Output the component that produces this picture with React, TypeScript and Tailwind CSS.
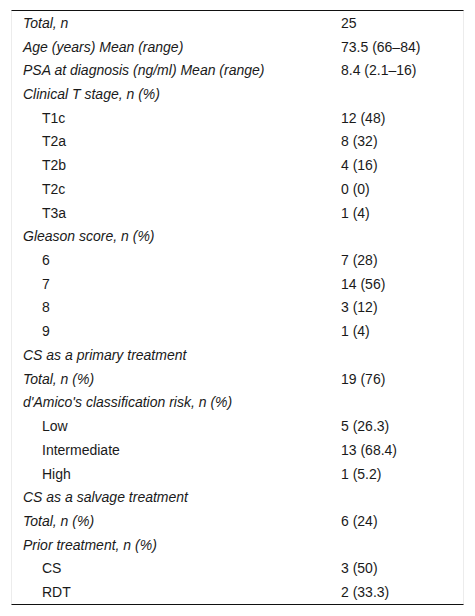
import React from 'react';

type Row = { label: string; value?: string; italic?: boolean; indent?: boolean };

const rows: Row[] = [
  { label: 'Total, n', value: '25', italic: true },
  { label: 'Age (years) Mean (range)', value: '73.5 (66–84)', italic: true },
  { label: 'PSA at diagnosis (ng/ml) Mean (range)', value: '8.4 (2.1–16)', italic: true },
  { label: 'Clinical T stage, n (%)', italic: true },
  { label: 'T1c', value: '12 (48)', indent: true },
  { label: 'T2a', value: '8 (32)', indent: true },
  { label: 'T2b', value: '4 (16)', indent: true },
  { label: 'T2c', value: '0 (0)', indent: true },
  { label: 'T3a', value: '1 (4)', indent: true },
  { label: 'Gleason score, n (%)', italic: true },
  { label: '6', value: '7 (28)', indent: true },
  { label: '7', value: '14 (56)', indent: true },
  { label: '8', value: '3 (12)', indent: true },
  { label: '9', value: '1 (4)', indent: true },
  { label: 'CS as a primary treatment', italic: true },
  { label: 'Total, n (%)', value: '19 (76)', italic: true },
  { label: "d'Amico's classification risk, n (%)", italic: true },
  { label: 'Low', value: '5 (26.3)', indent: true },
  { label: 'Intermediate', value: '13 (68.4)', indent: true },
  { label: 'High', value: '1 (5.2)', indent: true },
  { label: 'CS as a salvage treatment', italic: true },
  { label: 'Total, n (%)', value: '6 (24)', italic: true },
  { label: 'Prior treatment, n (%)', italic: true },
  { label: 'CS', value: '3 (50)', indent: true },
  { label: 'RDT', value: '2 (33.3)', indent: true },
];

const App = () => {
  return (
    <div className="min-h-[616px] w-[475px] bg-white pt-[10px] pl-[11px] font-['Liberation_Sans',Arial,sans-serif] text-[14px] text-[#1a1a1a]">
      <div className="w-[453px] border-t border-b border-t-[#111] border-b-[#111] border-x border-x-[#ececec]">
        {rows.map((r, i) => (
          <div key={i} className="flex h-[23.72px] items-center leading-none">
            <div className={`w-[318px] pl-[11px] ${r.italic ? 'italic' : ''}`}>
              {r.indent ? <span className="pl-[19px]">{r.label}</span> : r.label}
            </div>
            <div className="flex-1 pl-[11px]">{r.value}</div>
          </div>
        ))}
      </div>
    </div>
  );
};

export default App;
